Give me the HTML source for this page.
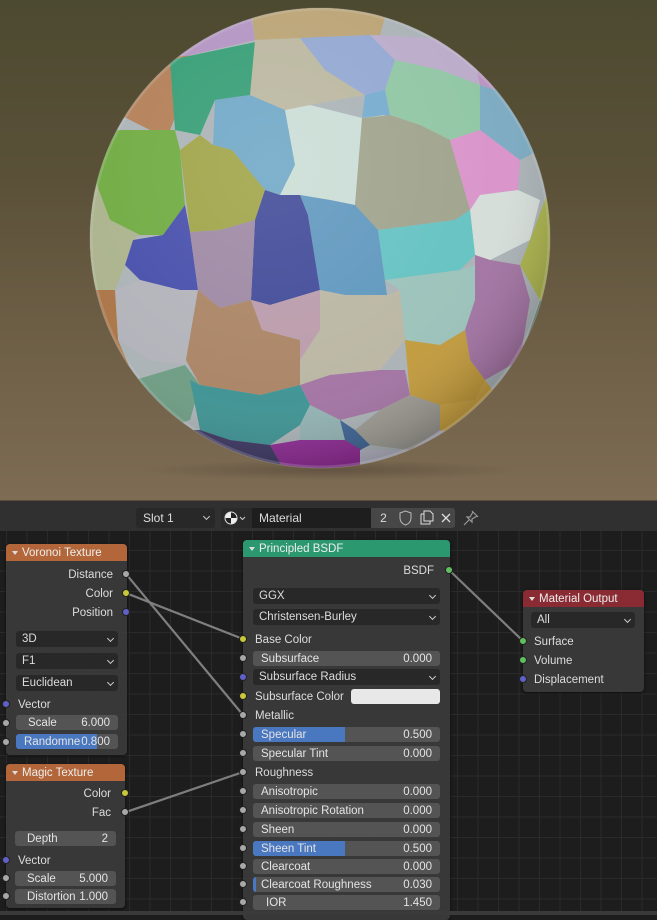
<!DOCTYPE html>
<html><head><meta charset="utf-8">
<style>
*{margin:0;padding:0;box-sizing:border-box}
html,body{width:657px;height:915px;overflow:hidden;background:#1d1d1d;font-family:"Liberation Sans",sans-serif;font-size:11px;color:#e0e0e0}
.abs{position:absolute}
#view{left:0;top:0;width:657px;height:501px;background:linear-gradient(180deg,#4c4a30 0%,#5a5038 35%,#6c5e45 65%,#7e6c54 100%)}
#ed{left:0;top:501px;width:657px;height:414px;background-color:#1d1d1d;
background-image:linear-gradient(#2a2a2a 1px,transparent 1px),linear-gradient(90deg,#2a2a2a 1px,transparent 1px);background-size:20.5px 20.5px;background-position:6px 8px}
#hdr{left:0;top:501px;width:657px;height:30px;background:#303030}
.box{position:absolute;height:20px;top:508px;line-height:20px;color:#ddd;font-size:12px}
.node{position:absolute;background:rgba(58,58,58,0.93);border-radius:4px;box-shadow:0 1px 3px rgba(0,0,0,.6)}
.nh{position:absolute;left:0;right:0;top:0;height:17px;border-radius:4px 4px 0 0;line-height:18px;padding-left:16px;font-size:11.5px;color:#eee}
.nh:before{content:"";position:absolute;left:6px;top:7px;border-left:3px solid transparent;border-right:3px solid transparent;border-top:4px solid #ddd}
.t{position:absolute;font-size:11.5px;color:#ddd;line-height:14px;white-space:nowrap}
.r{text-align:right}
.sk{position:absolute;width:8px;height:8px;border-radius:50%;border:1px solid #222}
.g{background:#a8a8a8}.y{background:#c8c83a}.b{background:#6060c8}.gr{background:#60c060}
.fld{position:absolute;height:15px;background:#545454;border-radius:3px;line-height:16px;font-size:11.5px;color:#e4e4e4;overflow:hidden}
.fld .l{position:absolute;left:6px;top:0}
.fld .v{position:absolute;right:8px;top:0}
.fld .fill{position:absolute;left:0;top:0;bottom:0;background:#4a78c0}
.dd{position:absolute;height:16px;background:#282828;border-radius:3px;line-height:17px;font-size:11.5px;color:#ddd;padding-left:6px}
.dd:after{content:"";position:absolute;right:5px;top:5px;width:4px;height:4px;border-right:1px solid #ccc;border-bottom:1px solid #ccc;transform:rotate(45deg)}
</style></head><body>
<div id="view" class="abs">
<svg width="657" height="501" style="position:absolute;left:0;top:0">
<defs>
<clipPath id="c"><circle cx="320" cy="238" r="230"/></clipPath>
<radialGradient id="sh" cx="40%" cy="35%" r="65%">
<stop offset="0" stop-color="#fff" stop-opacity="0.15"/>
<stop offset="0.75" stop-color="#fff" stop-opacity="0.05"/>
<stop offset="1" stop-color="#000" stop-opacity="0.2"/>
</radialGradient>
<radialGradient id="sd" cx="50%" cy="50%" r="50%"><stop offset="0" stop-color="#000" stop-opacity="0.2"/><stop offset="1" stop-color="#000" stop-opacity="0"/></radialGradient>
</defs>
<ellipse cx="330" cy="470" rx="190" ry="10" fill="url(#sd)"/>
<g clip-path="url(#c)">
<rect x="80" y="0" width="480" height="480" fill="#a8b0b4"/>
<polygon points="80,0 250,0 250,40 170,60 120,60 80,100" fill="#8aa8c0"/>
<polygon points="160,10 250,10 255,40 170,60" fill="#b090c0"/>
<polygon points="250,0 390,0 380,35 300,38 255,40" fill="#b8a070"/>
<polygon points="380,0 560,0 560,110 480,85 470,40" fill="#b890c0"/>
<polygon points="80,60 120,60 200,55 170,130 150,130 110,110 80,120" fill="#b07a50"/>
<polygon points="80,120 110,110 110,130 95,180 80,200" fill="#90b0c8"/>
<polygon points="170,60 265,40 250,95 215,100 200,135 175,130" fill="#2e9a70"/>
<polygon points="255,40 300,38 325,70 365,95 310,105 285,110 250,95" fill="#b8b49c"/>
<polygon points="300,38 370,35 395,60 385,90 365,95 325,70" fill="#8fa4d0"/>
<polygon points="370,35 470,40 480,85 440,70 395,60" fill="#b8a8c8"/>
<polygon points="395,60 440,70 480,85 480,130 450,140 420,125 390,115 385,90" fill="#8cc4a0"/>
<polygon points="480,85 560,110 560,160 540,150 520,160 480,130" fill="#78a8c0"/>
<polygon points="365,95 385,90 390,115 362,118" fill="#70a8cc"/>
<polygon points="215,100 250,95 285,110 295,165 280,195 265,190 232,150 213,145" fill="#6aa4c4"/>
<polygon points="285,110 310,105 362,118 385,115 362,150 355,205 330,200 300,195 280,195 295,165" fill="#c8dcd4"/>
<polygon points="362,118 390,115 420,125 450,140 470,210 455,220 378,230 355,205" fill="#9ca088"/>
<polygon points="450,140 480,130 520,160 518,190 480,195 470,210" fill="#d890c8"/>
<polygon points="470,210 480,195 518,190 540,200 530,240 490,260 475,255" fill="#d4dcd8"/>
<polygon points="110,130 175,130 180,150 185,205 163,235 140,235 110,220 95,180" fill="#6aa83a"/>
<polygon points="200,135 213,145 232,150 265,190 255,220 220,230 190,232 180,150" fill="#9ca040"/>
<polygon points="133,240 163,235 185,205 190,232 198,290 180,290 140,280 125,265" fill="#4048a8"/>
<polygon points="255,220 265,190 280,195 300,195 308,215 320,290 270,305 251,300" fill="#3a4494"/>
<polygon points="300,195 330,200 355,205 378,230 387,295 345,295 320,290 308,215" fill="#5a94bc"/>
<polygon points="378,230 455,220 470,210 475,255 460,270 385,280" fill="#60c0c0"/>
<polygon points="190,232 220,230 255,220 251,300 220,308 198,290" fill="#9a84a0"/>
<polygon points="80,200 95,180 110,220 140,235 133,240 125,265 115,290 80,290" fill="#a8b088"/>
<polygon points="115,290 140,280 180,290 198,290 190,335 185,365 150,360 118,340" fill="#b0b0b8"/>
<polygon points="80,290 115,290 118,340 135,380 110,400 80,400" fill="#a87040"/>
<polygon points="198,290 220,308 251,300 262,330 300,340 300,385 260,395 200,385 186,360" fill="#a88060"/>
<polygon points="251,300 270,305 320,290 335,300 320,330 300,360 300,340 262,330" fill="#b898a8"/>
<polygon points="320,290 345,295 387,295 400,290 405,340 380,370 330,375 300,385 300,360 320,330" fill="#b8b4a0"/>
<polygon points="385,280 460,270 475,265 475,300 465,330 440,345 405,340 400,290" fill="#98c0b8"/>
<polygon points="475,255 490,260 520,265 530,300 520,360 485,380 470,360 465,330 475,300" fill="#a070a0"/>
<polygon points="520,265 530,240 560,160 560,330 540,300" fill="#a8b048"/>
<polygon points="520,360 540,300 560,330 560,400 530,400" fill="#4e8070"/>
<polygon points="405,340 440,345 465,330 470,360 485,380 475,400 440,405 410,395" fill="#c09838"/>
<polygon points="300,385 330,375 380,370 405,370 410,395 380,410 340,420 310,405" fill="#a070a0"/>
<polygon points="380,410 410,395 440,405 440,430 410,450 370,445 355,430" fill="#9a9890"/>
<polygon points="440,405 475,400 485,380 500,400 470,440 440,430" fill="#c8a040"/>
<polygon points="110,400 135,380 185,365 200,385 190,420 160,430 140,410" fill="#6a9a80"/>
<polygon points="190,380 200,385 260,395 300,385 310,405 300,425 270,445 230,440 200,430" fill="#3a9090"/>
<polygon points="300,425 310,405 340,420 355,430 345,440 300,440" fill="#90b0b0"/>
<polygon points="340,420 355,430 370,445 360,450 345,440" fill="#3a6090"/>
<polygon points="270,445 300,440 345,440 370,455 360,480 290,480" fill="#8a2890"/>
<polygon points="160,430 200,430 230,440 270,445 290,480 200,480" fill="#3a3460"/>
<polygon points="360,450 410,450 440,430 470,440 450,480 360,480" fill="#b0b0c0"/>
<rect x="80" y="0" width="480" height="480" fill="url(#sh)"/>
</g>
<circle cx="320" cy="238" r="229" fill="none" stroke="#d8d8d8" stroke-opacity="0.2" stroke-width="3"/>
</svg>
</div>
<div style="position:absolute;left:0;top:500px;width:657px;height:2px;background:#5a4c38"></div>
<div id="ed" class="abs"></div>
<div id="hdr" class="abs"></div>
<div class="box" style="left:136px;width:79px;background:#282828;border-radius:3px;padding-left:7px">Slot 1<span style="position:absolute;right:6px;top:6px;width:5px;height:5px;border-right:1px solid #ccc;border-bottom:1px solid #ccc;transform:rotate(45deg)"></span></div>
<div class="box" style="left:221px;width:31px;background:#2a2a2a;border-radius:3px 0 0 3px">
<svg width="31" height="20" style="position:absolute;left:0;top:0"><circle cx="10" cy="10" r="6" fill="#eee"/><path d="M10 4 A6 6 0 0 1 16 10 L10 10 Z" fill="#222"/><path d="M10 10 L4 10 A6 6 0 0 0 10 16 Z" fill="#222"/><circle cx="10" cy="10" r="6" fill="none" stroke="#ddd"/><path d="M19 9 l2.5 2.5 l2.5 -2.5" stroke="#ccc" fill="none"/></svg></div>
<div class="box" style="left:252px;width:119px;background:#1e1e1e;padding-left:7px">Material</div>
<div class="box" style="left:371px;width:25px;background:#474747;text-align:center">2</div>
<div class="box" style="left:396px;width:19px;background:#474747"><svg width="19" height="20"><path d="M4 5 L9.5 3 L15 5 L15 10 Q15 15 9.5 17 Q4 15 4 10 Z" fill="none" stroke="#bbb"/></svg></div>
<div class="box" style="left:415px;width:23px;background:#474747"><svg width="23" height="20"><path d="M6 6 H9 M6 6 V16 H15 V13" fill="none" stroke="#ddd"/><path d="M9 3 H15 L18 6 V13 H9 Z" fill="none" stroke="#ddd"/></svg></div>
<div class="box" style="left:438px;width:17px;background:#474747;border-radius:0 3px 3px 0"><svg width="17" height="20"><path d="M4 6 L12 14 M12 6 L4 14" stroke="#ddd" stroke-width="1.3"/></svg></div>
<div class="box" style="left:461px;width:20px"><svg width="20" height="20"><path d="M11 3 L17 9 M12 4 L9 9 L6 9 L11 14 L11 11 L16 8 M8 12 L3 17" fill="none" stroke="#999" stroke-width="1.2"/></svg></div>

<svg width="657" height="915" style="position:absolute;left:0;top:0;z-index:1">
<g stroke="#8a8a8a" stroke-width="2.2" fill="none" opacity="0.9">
<line x1="126" y1="574" x2="243" y2="715"/>
<line x1="126" y1="593" x2="243" y2="639"/>
<line x1="126" y1="812" x2="243" y2="772"/>
<line x1="449" y1="570" x2="523" y2="641"/>
</g>
</svg>

<div class="node" style="left:6px;top:544px;width:121px;height:211px;z-index:2">
<div class="nh" style="background:#b2663a">Voronoi Texture</div>
<div class="t r" style="right:14px;top:24px">Distance</div>
<div class="t r" style="right:14px;top:43px">Color</div>
<div class="t r" style="right:14px;top:62px">Position</div>
<div class="dd" style="left:10px;top:87px;width:102px">3D</div>
<div class="dd" style="left:10px;top:109px;width:102px">F1</div>
<div class="dd" style="left:10px;top:131px;width:102px">Euclidean</div>
<div class="t" style="left:12px;top:154px">Vector</div>
<div class="fld" style="left:10px;top:171px;width:102px"><span class="l" style="left:12px">Scale</span><span class="v">6.000</span></div>
<div class="fld" style="left:10px;top:190px;width:102px"><div class="fill" style="width:81px"></div><span class="l" style="left:8px">Randomne</span><span class="v">0.800</span></div>
</div>
<div class="node" style="left:6px;top:764px;width:119px;height:144px;z-index:2">
<div class="nh" style="background:#b2663a">Magic Texture</div>
<div class="t r" style="right:14px;top:23px">Color</div>
<div class="t r" style="right:14px;top:42px">Fac</div>
<div class="fld" style="left:9px;top:67px;width:101px"><span class="l" style="left:12px">Depth</span><span class="v">2</span></div>
<div class="t" style="left:12px;top:90px">Vector</div>
<div class="fld" style="left:9px;top:107px;width:101px"><span class="l" style="left:12px">Scale</span><span class="v">5.000</span></div>
<div class="fld" style="left:9px;top:125px;width:101px"><span class="l" style="left:12px">Distortion</span><span class="v">1.000</span></div>
</div>
<div class="node" style="left:243px;top:540px;width:207px;height:380px;z-index:2">
<div class="nh" style="background:#2c9870">Principled BSDF</div>
<div class="t r" style="right:16px;top:24px">BSDF</div>
<div class="dd" style="left:10px;top:48px;width:187px">GGX</div>
<div class="dd" style="left:10px;top:69px;width:187px">Christensen-Burley</div>
<div class="t" style="left:12px;top:93px">Base Color</div>
<div class="fld" style="left:10px;top:111px;width:187px"><span class="l" style="left:8px">Subsurface</span><span class="v">0.000</span></div>
<div class="dd" style="left:10px;top:129px;width:187px;background:#282828">Subsurface Radius</div>
<div class="t" style="left:12px;top:150px">Subsurface Color</div>
<div style="position:absolute;left:108px;top:149px;width:89px;height:15px;background:#e8e8e8;border-radius:3px"></div>
<div class="t" style="left:12px;top:169px">Metallic</div>
<div class="fld" style="left:10px;top:187px;width:187px"><div class="fill" style="width:92px"></div><span class="l" style="left:8px">Specular</span><span class="v">0.500</span></div>
<div class="fld" style="left:10px;top:206px;width:187px"><span class="l" style="left:8px">Specular Tint</span><span class="v">0.000</span></div>
<div class="t" style="left:12px;top:226px">Roughness</div>
<div class="fld" style="left:10px;top:244px;width:187px"><span class="l" style="left:8px">Anisotropic</span><span class="v">0.000</span></div>
<div class="fld" style="left:10px;top:263px;width:187px"><span class="l" style="left:8px">Anisotropic Rotation</span><span class="v">0.000</span></div>
<div class="fld" style="left:10px;top:282px;width:187px"><span class="l" style="left:8px">Sheen</span><span class="v">0.000</span></div>
<div class="fld" style="left:10px;top:301px;width:187px"><div class="fill" style="width:92px"></div><span class="l" style="left:8px">Sheen Tint</span><span class="v">0.500</span></div>
<div class="fld" style="left:10px;top:319px;width:187px"><span class="l" style="left:8px">Clearcoat</span><span class="v">0.000</span></div>
<div class="fld" style="left:10px;top:337px;width:187px"><div class="fill" style="width:3px"></div><span class="l" style="left:8px">Clearcoat Roughness</span><span class="v">0.030</span></div>
<div class="fld" style="left:10px;top:355px;width:187px"><span class="l" style="left:13px">IOR</span><span class="v">1.450</span></div>
</div>
<div class="node" style="left:523px;top:590px;width:121px;height:102px;z-index:2">
<div class="nh" style="background:#8a2a32">Material Output</div>
<div class="dd" style="left:8px;top:22px;width:104px">All</div>
<div class="t" style="left:11px;top:45px">Surface</div>
<div class="t" style="left:11px;top:64px">Volume</div>
<div class="t" style="left:11px;top:83px">Displacement</div>
</div>
<div style="position:absolute;left:0;top:0;z-index:3">
<div class="sk g" style="left:122px;top:570px"></div>
<div class="sk y" style="left:122px;top:589px"></div>
<div class="sk b" style="left:122px;top:608px"></div>
<div class="sk b" style="left:2px;top:700px"></div>
<div class="sk g" style="left:2px;top:719px"></div>
<div class="sk g" style="left:2px;top:738px"></div>
<div class="sk y" style="left:121px;top:789px"></div>
<div class="sk g" style="left:121px;top:808px"></div>
<div class="sk b" style="left:2px;top:856px"></div>
<div class="sk g" style="left:2px;top:874px"></div>
<div class="sk g" style="left:2px;top:892px"></div>
<div class="sk gr" style="left:445px;top:566px"></div>
<div class="sk y" style="left:239px;top:635px"></div>
<div class="sk g" style="left:239px;top:654px"></div>
<div class="sk b" style="left:239px;top:673px"></div>
<div class="sk y" style="left:239px;top:692px"></div>
<div class="sk g" style="left:239px;top:711px"></div>
<div class="sk g" style="left:239px;top:730px"></div>
<div class="sk g" style="left:239px;top:749px"></div>
<div class="sk g" style="left:239px;top:768px"></div>
<div class="sk g" style="left:239px;top:787px"></div>
<div class="sk g" style="left:239px;top:806px"></div>
<div class="sk g" style="left:239px;top:825px"></div>
<div class="sk g" style="left:239px;top:844px"></div>
<div class="sk g" style="left:239px;top:862px"></div>
<div class="sk g" style="left:239px;top:880px"></div>
<div class="sk g" style="left:239px;top:898px"></div>
<div class="sk gr" style="left:519px;top:637px"></div>
<div class="sk gr" style="left:519px;top:656px"></div>
<div class="sk b" style="left:519px;top:675px"></div>
</div>
<div style="position:absolute;left:0;top:911px;width:657px;height:4px;background:#3a3a3a;z-index:4"></div>
</body></html>
